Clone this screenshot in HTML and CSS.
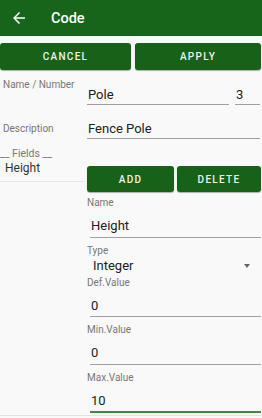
FILE: index.html
```html
<!doctype html>
<html>
    <head>
        <meta name="viewport" content="width=device-width, initial-scale=1.0">
        <title>Code</title>
        <link rel="stylesheet" href="styles.css">
    </head>
    <body>
        <div class="toolbar">
            <svg class="back" width="18" height="18" viewBox="0 0 24 24">
                <path d="M20 11H7.83l5.59-5.59L12 4l-8 8 8 8 1.41-1.41L7.83 13H20v-2z" fill="#fff"/>
            </svg>
            <h1>Code</h1>
        </div>

        <div class="actions">
            <button class="btn">Cancel</button>
            <button class="btn">Apply</button>
        </div>

        <div class="form">
            <div class="label label-name">Name / Number</div>
            <div class="pair">
                <div class="input input-name">Pole</div>
                <div class="input input-num">3</div>
            </div>

            <div class="label label-desc">Description</div>
            <div class="desc-row">
                <div class="input">Fence Pole</div>
            </div>

            <div class="fields">
                <div class="fields-title">__ Fields __</div>
                <div class="field-item">Height</div>
            </div>

            <div class="editor">
                <div class="editor-actions">
                    <button class="btn">Add</button>
                    <button class="btn">Delete</button>
                </div>

                <div class="flabel first">Name</div>
                <div class="finput">Height</div>

                <div class="flabel">Type</div>
                <div class="spinner">
                    <span>Integer</span>
                    <span class="caret"></span>
                </div>

                <div class="flabel flush">Def.Value</div>
                <div class="finput">0</div>

                <div class="flabel">Min.Value</div>
                <div class="finput">0</div>

                <div class="flabel">Max.Value</div>
                <div class="finput focused">10</div>
            </div>
        </div>

        <div class="bottom-line"></div>
    </body>
</html>
```

FILE: styles.css
```css
body {
    font-family: Roboto, "Noto Sans", sans-serif;
    background-color: #f9f9f9;
    color: #212121;
    margin: 0;
    padding: 0;
}

.toolbar {
    height: 36px;
    background-color: #17651b;
    display: flex;
    align-items: center;
    padding-left: 10px;
}

.toolbar h1 {
    margin: 0 0 0 23px;
    font-size: 14.5px;
    font-weight: 500;
    color: #fff;
}

.actions {
    display: grid;
    grid-template-columns: 131px 1fr;
    gap: 4px;
    margin-top: 7px;
    padding-right: 1px;
}

.btn {
    height: 27px;
    border: none;
    border-radius: 3px;
    background-color: #176219;
    box-shadow: 0 1px 1px rgba(0, 0, 0, 0.3);
    color: #eef2ee;
    font-family: inherit;
    font-size: 10px;
    font-weight: 500;
    letter-spacing: 1.3px;
    text-transform: uppercase;
    padding: 0;
}

.form {
    display: grid;
    grid-template-columns: 87px 1fr;
}

.label {
    font-size: 10px;
    line-height: 12px;
    color: #777;
    padding-left: 3px;
}

.label-name {
    padding-top: 9px;
}

.label-desc {
    padding-top: 18.5px;
}

.input {
    font-size: 13px;
    line-height: 18px;
    border-bottom: 1px solid #a0a0a0;
    padding-left: 1px;
}

.pair {
    display: flex;
    gap: 6px;
    padding-top: 15.5px;
    padding-right: 2px;
}

.input-name {
    flex: 1;
}

.input-num {
    width: 24px;
}

.desc-row {
    padding-top: 15.5px;
    padding-right: 2px;
}

.fields {
    padding-top: 9px;
}

.fields-title {
    font-size: 10.5px;
    line-height: 12px;
    color: #777;
}

.field-item {
    font-size: 12px;
    line-height: 14px;
    color: #333;
    padding: 1px 0 6px 5px;
    border-bottom: 1px solid #e6e6e6;
    margin-right: 2px;
}

.editor {
    padding-top: 27px;
}

.editor-actions {
    display: grid;
    grid-template-columns: 87px 1fr;
    gap: 3px;
    padding-right: 1px;
}

.editor-actions .btn {
    height: 26px;
}

.flabel {
    font-size: 10px;
    line-height: 12px;
    color: #777;
    margin-top: 7px;
}

.flabel.first {
    margin-top: 5px;
}

.flabel.flush {
    margin-top: 0;
}

.finput {
    font-size: 13px;
    line-height: 18px;
    padding: 8px 0 1.5px 1px;
    margin: 0 1px 0 3px;
    border-bottom: 1px solid #a0a0a0;
}

.finput.focused {
    border-bottom: 2px solid #3b8a3e;
}

.spinner {
    display: flex;
    justify-content: space-between;
    align-items: center;
    font-size: 13px;
    line-height: 18px;
    height: 18px;
    padding: 0 12px 2px 6px;
}

.caret {
    width: 0;
    height: 0;
    border-left: 3.5px solid transparent;
    border-right: 3.5px solid transparent;
    border-top: 4px solid #666;
}

.bottom-line {
    margin-top: 2px;
    border-top: 1px solid #e2e2e2;
}
```
